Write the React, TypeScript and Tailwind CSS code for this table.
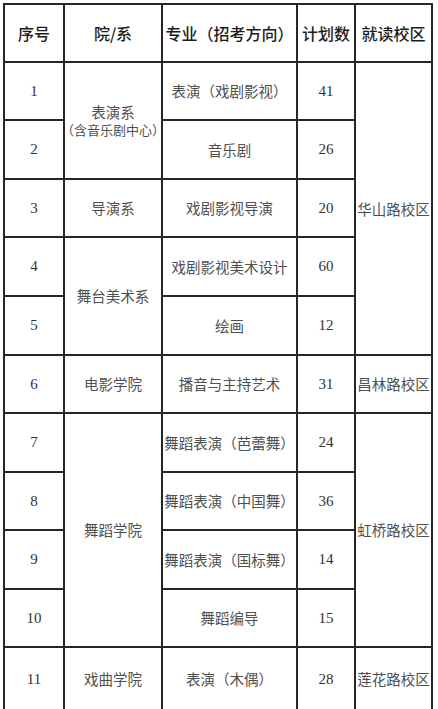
import React from "react";

const cjk = { fontFamily: '"Noto Sans CJK SC", "Noto Sans", sans-serif' };

type Row = { no: string; major: string; plan: string };

const rows: Row[] = [
  { no: "1", major: "表演（戏剧影视）", plan: "41" },
  { no: "2", major: "音乐剧", plan: "26" },
  { no: "3", major: "戏剧影视导演", plan: "20" },
  { no: "4", major: "戏剧影视美术设计", plan: "60" },
  { no: "5", major: "绘画", plan: "12" },
  { no: "6", major: "播音与主持艺术", plan: "31" },
  { no: "7", major: "舞蹈表演（芭蕾舞）", plan: "24" },
  { no: "8", major: "舞蹈表演（中国舞）", plan: "36" },
  { no: "9", major: "舞蹈表演（国标舞）", plan: "14" },
  { no: "10", major: "舞蹈编导", plan: "15" },
  { no: "11", major: "表演（木偶）", plan: "28" },
];

const Cell = ({ children, className = "" }: { children?: React.ReactNode; className?: string }) => (
  <div className={`bg-white flex flex-col items-center justify-center text-center ${className}`}>{children}</div>
);

const Num = ({ v }: { v: string }) => (
  <Cell className="text-[15px] text-[#333]">
    <span style={{ fontFamily: '"Liberation Serif", "Times New Roman", serif' }}>{v}</span>
  </Cell>
);

const Txt = ({ children, className = "" }: { children: React.ReactNode; className?: string }) => (
  <Cell className={`text-[14.5px] text-[#505050] leading-[20px] ${className}`}>
    <span style={cjk}>{children}</span>
  </Cell>
);

const Head = ({ children }: { children: React.ReactNode }) => (
  <Cell className="text-[16px] font-medium text-[#1c1c1c]">
    <span style={cjk}>{children}</span>
  </Cell>
);

export default function App() {
  return (
    <div className="w-[438px] h-[709px] overflow-hidden bg-white">
      <div className="ml-[3px] mt-[3px] inline-grid bg-[#262626] p-[2px] gap-[2px] grid-cols-[58px_96px_133px_56px_75px] grid-rows-[56px_56px_57px_56px_57px_57px_56px_57px_56px_57px_56px_62px]">
        <Head>序号</Head>
        <Head>院/系</Head>
        <Head>专业（招考方向）</Head>
        <Head>计划数</Head>
        <Head>就读校区</Head>

        {/* row 1 */}
        <Num v={rows[0].no} />
        <Cell className="row-span-2 text-[#505050]">
          <span style={cjk} className="block text-[14.5px] leading-[18px]">表演系</span>
          <span style={cjk} className="block text-[13px] leading-[18px] whitespace-nowrap">（含音乐剧中心）</span>
        </Cell>
        <Txt>{rows[0].major}</Txt>
        <Num v={rows[0].plan} />
        <Txt className="row-span-5">华山路校区</Txt>

        {/* row 2 */}
        <Num v={rows[1].no} />
        <Txt>{rows[1].major}</Txt>
        <Num v={rows[1].plan} />

        {/* row 3 */}
        <Num v={rows[2].no} />
        <Txt>导演系</Txt>
        <Txt>{rows[2].major}</Txt>
        <Num v={rows[2].plan} />

        {/* row 4 */}
        <Num v={rows[3].no} />
        <Txt className="row-span-2">舞台美术系</Txt>
        <Txt>{rows[3].major}</Txt>
        <Num v={rows[3].plan} />

        {/* row 5 */}
        <Num v={rows[4].no} />
        <Txt>{rows[4].major}</Txt>
        <Num v={rows[4].plan} />

        {/* row 6 */}
        <Num v={rows[5].no} />
        <Txt>电影学院</Txt>
        <Txt>{rows[5].major}</Txt>
        <Num v={rows[5].plan} />
        <Txt>昌林路校区</Txt>

        {/* row 7 */}
        <Num v={rows[6].no} />
        <Txt className="row-span-4">舞蹈学院</Txt>
        <Txt>{rows[6].major}</Txt>
        <Num v={rows[6].plan} />
        <Txt className="row-span-4">虹桥路校区</Txt>

        {/* rows 8-10 */}
        {rows.slice(7, 10).map((r) => (
          <React.Fragment key={r.no}>
            <Num v={r.no} />
            <Txt>{r.major}</Txt>
            <Num v={r.plan} />
          </React.Fragment>
        ))}

        {/* row 11 */}
        <Num v={rows[10].no} />
        <Txt>戏曲学院</Txt>
        <Txt>{rows[10].major}</Txt>
        <Num v={rows[10].plan} />
        <Txt>莲花路校区</Txt>
      </div>
    </div>
  );
}
